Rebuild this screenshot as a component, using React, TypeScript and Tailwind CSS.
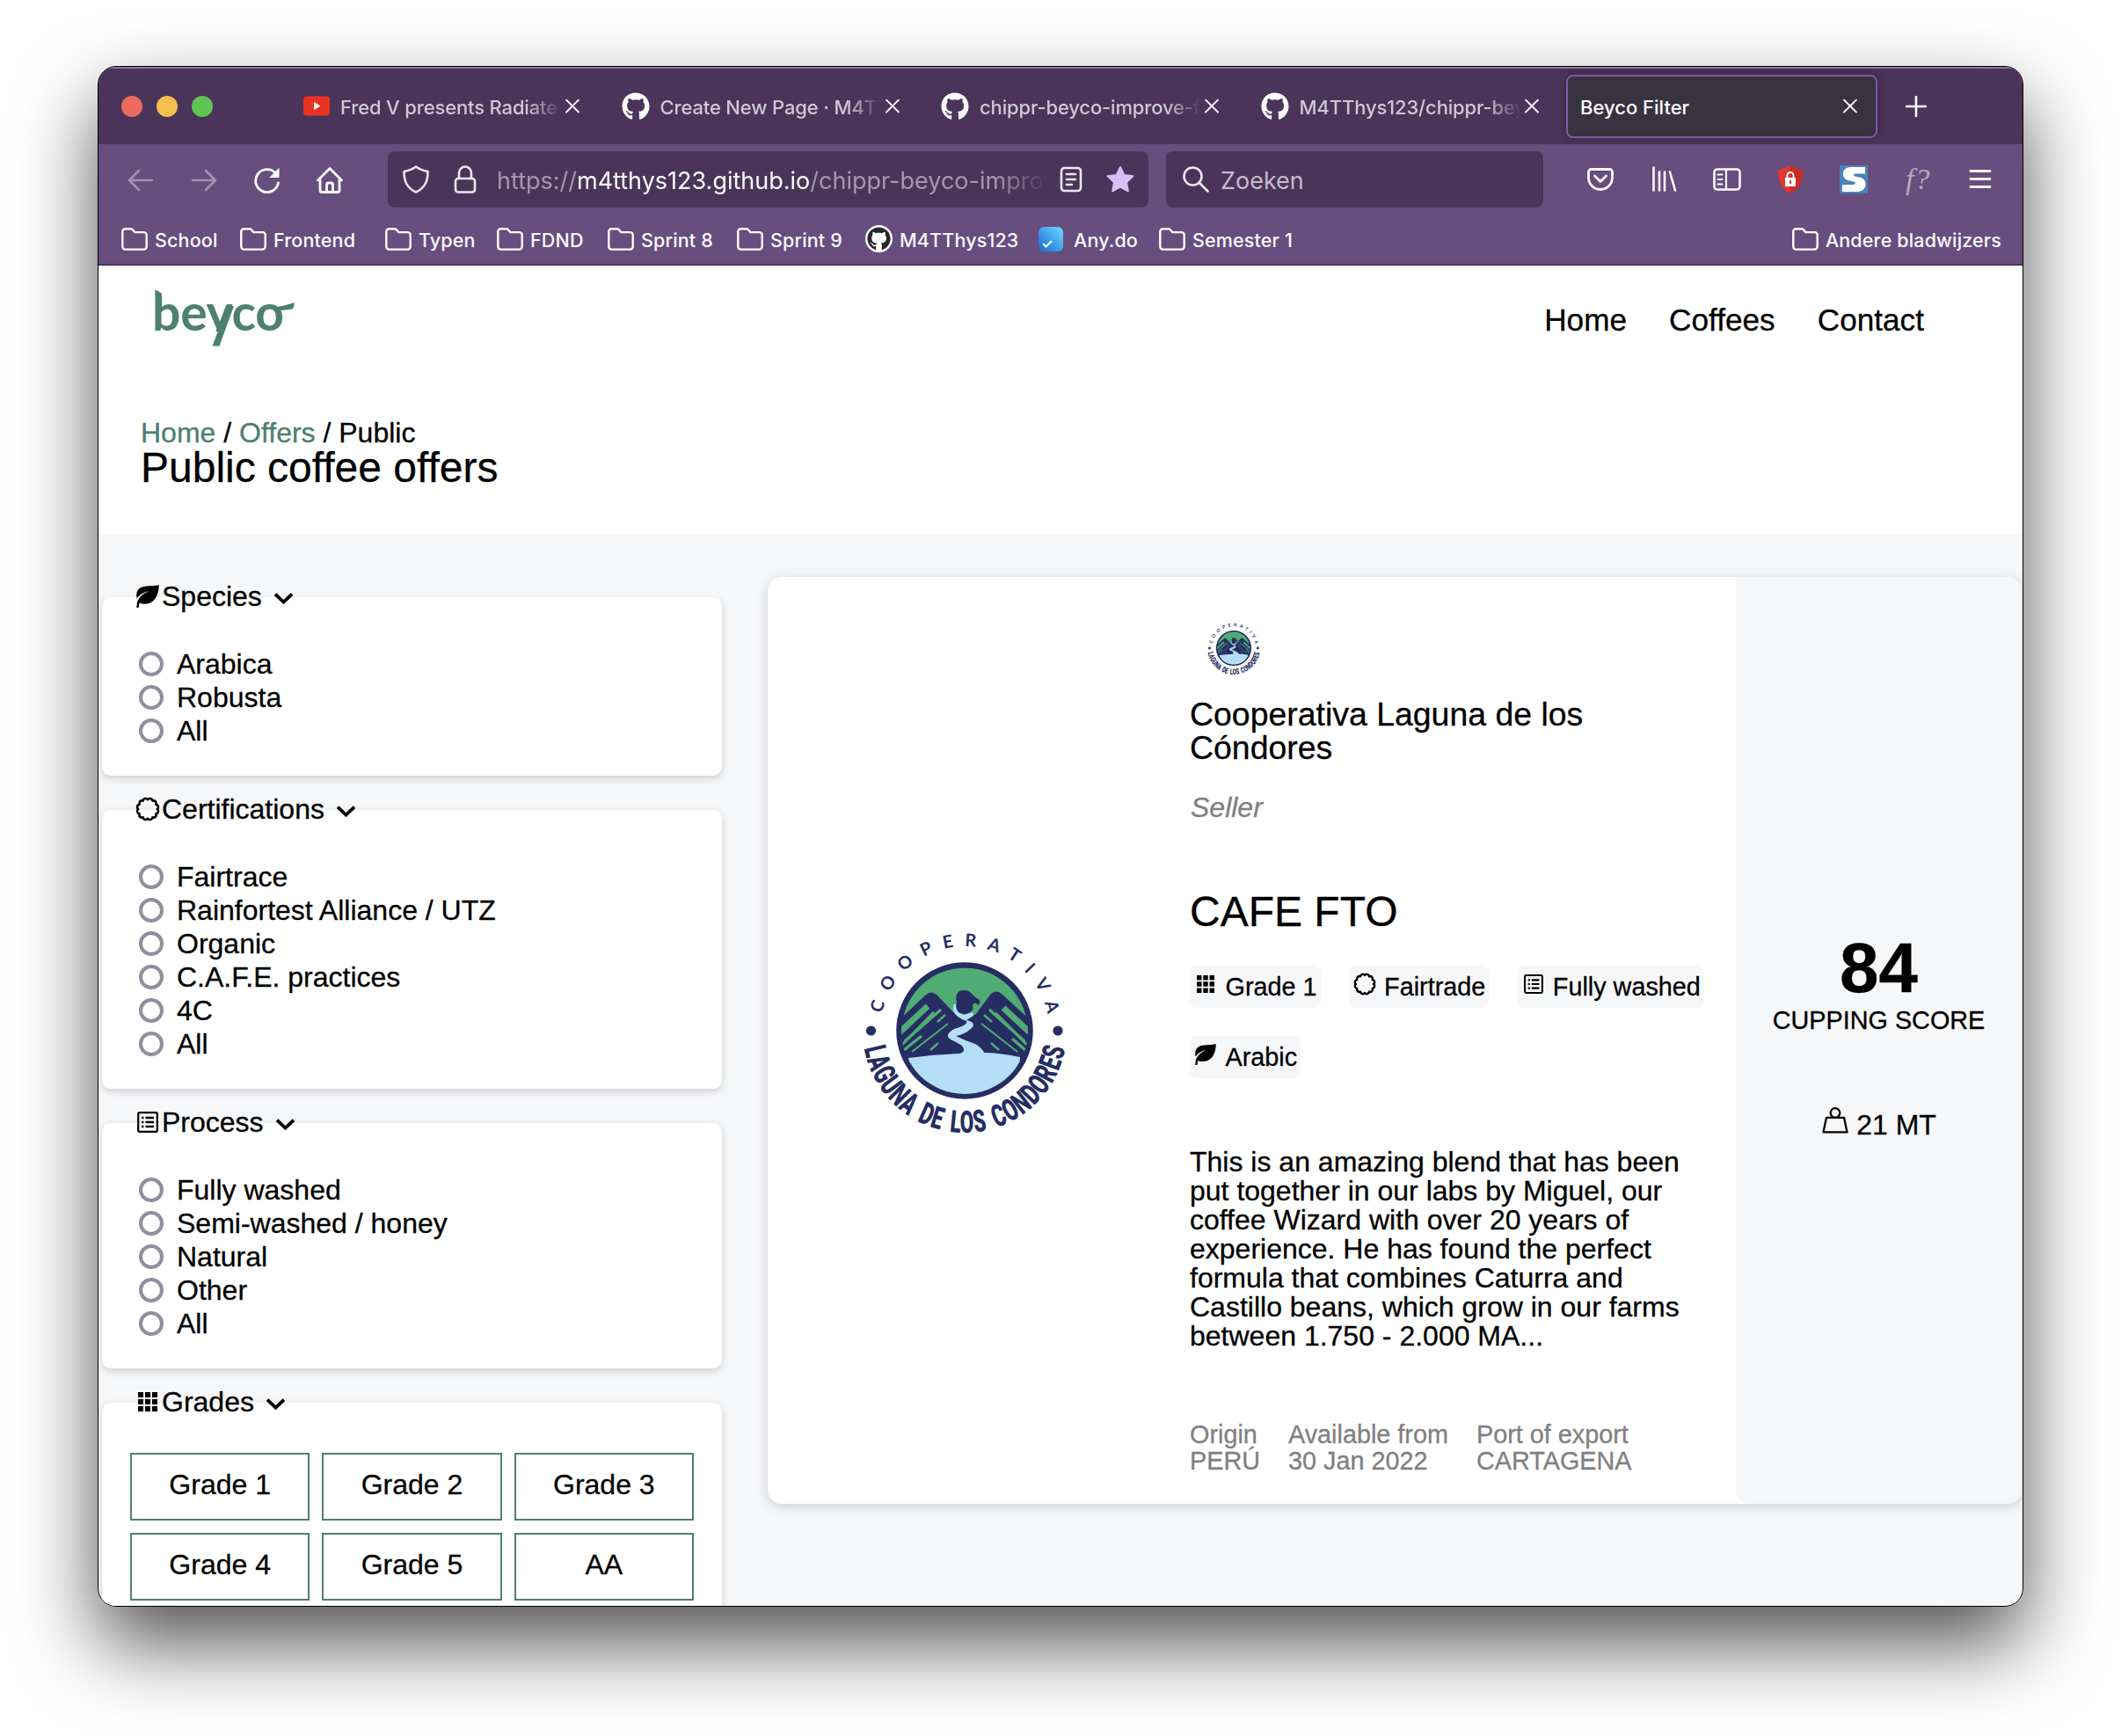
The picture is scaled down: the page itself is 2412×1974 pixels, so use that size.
import React from "react";
import { FaGithub } from "react-icons/fa";

type IconProps = { className?: string };

/* ---------- page icons ---------- */

const LeafIcon = ({ className = "" }: IconProps) => (
  <svg viewBox="0 0 26 26" className={className} fill="currentColor">
    <path d="M25.6 0C19 2.2 10 .2 4.400 3.600 .4 6 -.4 11 .6 15.600 3.500 11.500 8 8.300 14.500 7.200 8.500 9.300 3 13.800 1 19.500L.3 26h2.400l.8-5.500C8 22.500 15 22.500 19.500 18 24 13.500 26 6 25.600 0z" />
  </svg>
);

const bumps = Array.from({ length: 12 }, (_, i) => {
  const a = ((i + 1) * Math.PI) / 6;
  return `A3 3 0 0 1 ${(14 + 10.8 * Math.sin(a)).toFixed(2)} ${(14 - 10.8 * Math.cos(a)).toFixed(2)}`;
}).join("");

const BadgeIcon = ({ className = "" }: IconProps) => (
  <svg viewBox="0 0 28 28" className={className} fill="none" stroke="currentColor" strokeWidth="2.6" strokeLinejoin="round">
    <path d={`M14 3.200${bumps}Z`} />
  </svg>
);

const ListIcon = ({ className = "" }: IconProps) => (
  <svg viewBox="0 0 24 24" className={className} fill="none" stroke="currentColor" strokeWidth="2.2">
    <rect x="1.200" y="1.200" width="21.600" height="21.600" rx="1.500" />
    <path d="M5 7h2.400M5 12h2.400M5 17h2.400M9.500 7h9.500M9.500 12h9.500M9.500 17h9.500" strokeWidth="2.400" />
  </svg>
);

const GridIcon = ({ className = "" }: IconProps) => (
  <svg viewBox="0 0 22 22" className={className} fill="currentColor">
    {[0, 8, 16].map((y) => [0, 8, 16].map((x) => <rect key={`${x}-${y}`} x={x} y={y} width="6" height="6" />))}
  </svg>
);

const Chevron = ({ className = "" }: IconProps) => (
  <svg viewBox="0 0 24 14" className={className} fill="none" stroke="currentColor" strokeWidth="4">
    <path d="M1.800 1.800 12 11.500 22.200 1.800" />
  </svg>
);

const WeightIcon = ({ className = "" }: IconProps) => (
  <svg viewBox="0 0 30 30" className={className} fill="none" stroke="currentColor" strokeWidth="2.300" strokeLinejoin="round">
    <circle cx="15" cy="6.500" r="5.300" />
    <path d="M5 11.800h20l3.500 16.500h-27z" />
  </svg>
);

/* ---------- logos ---------- */

const BeycoLogo = () => (
  <svg width="170" height="72" viewBox="0 0 170 72" className="block text-[#4d8070]" fill="currentColor">
    <defs>
      <clipPath id="wordmark">
        <rect x="-5" y="-5" width="180" height="52" />
      </clipPath>
    </defs>
    <text x="-3" y="46" fontFamily="Lato, sans-serif" fontWeight="700" fontSize="57" textLength="150" clipPath="url(#wordmark)">
      beyco
    </text>
    <path d="M0 0c5 .5 8 3 8.200 8V22H1.200V10z" />
    <path d="M82.500 18h7.500L73.500 63.500H65.500z" />
    <path d="M131 18.500C140 20 150 17 158.500 14c.5 3 0 5-2 7.500-5 1-12 .8-17 2.500z" />
  </svg>
);

const CondorLogo = ({ id, className = "" }: { id: string; className?: string }) => (
  <svg viewBox="-120 -120 240 240" className={className}>
    <defs>
      <path id={`${id}-top`} d="M-96 0A96 96 0 0 1 96 0" />
      <path id={`${id}-bottom`} d="M-116 0A116 116 0 0 0 116 0" />
      <clipPath id={`${id}-clip`}>
        <circle r="72" />
      </clipPath>
    </defs>
    <circle r="74.500" fill="#50ab74" stroke="#262d63" strokeWidth="6.500" />
    <g clipPath={`url(#${id}-clip)`}>
      <path d="M-80 -7-44-41q6-5 12 0l22 23h22L30-42q6-5 12 0L80-7V40H-80z" fill="#262d63" />
      <g stroke="#50ab74" strokeWidth="3.200">
        <path d="M-74 2-42-28" strokeWidth="7" />
        <path d="M-72 17-35-21M-68 12-27-24M-69 22-49 6" />
        <path d="M-60 24-19-8" strokeWidth="2" />
        <path d="M-31-10-22-18M-39 22-30 14" strokeWidth="2.500" />
        <path d="M74 2 44-26" strokeWidth="7" />
        <path d="M72 17 35-20M68 12 28-24M69 22 54 9" />
        <path d="M60 24 19-8" strokeWidth="2" />
        <path d="M31-10 22-18M39 22 30 14" strokeWidth="2.500" />
      </g>
      <path d="M-64 31Q-35 27-6 26q8-2 3-9-6-4-13-7-8-5 4-12 17-5 14-9-12-4-15-12-1-6 2-8l4 2q-1 9 6 11l10-3 1 4-8 5q12 3 6 9-9 8-18 9 10 5 22 9 8 5 10 10 16 0 41 5L60 74H-60z" fill="#b4def7" />
      <path d="M-9-33a11 11 0 0 1 3-12q9-3 14 3 4 5 9 7 1 3-1 6-6-5-7 1 2 4-3 7-8 5-14-1-3-5-1-11z" fill="#262d63" />
    </g>
    <g fill="#262d63">
      <circle cx="-106.500" cy="0" r="5.600" />
      <circle cx="106" cy="0" r="5.600" />
      <text fontFamily="Lato, sans-serif" fontWeight="700" fontSize="20">
        <textPath href={`#${id}-top`} startOffset="20" textLength="262">
          COOPERATIVA
        </textPath>
      </text>
      <text fontFamily="Roboto, sans-serif" fontWeight="900" fontSize="35" wordSpacing="5" letterSpacing="1.500">
        <textPath href={`#${id}-bottom`} startOffset="20" textLength="325" lengthAdjust="spacingAndGlyphs">
          LAGUNA DE LOS CONDORES
        </textPath>
      </text>
    </g>
  </svg>
);

/* ---------- browser chrome ---------- */

const Stroke = ({ children, className = "", w = 2.600 }: { children: React.ReactNode; className?: string; w?: number }) => (
  <svg viewBox="0 0 32 32" className={`block size-8 shrink-0 ${className}`} fill="none" stroke="currentColor" strokeWidth={w} strokeLinecap="round" strokeLinejoin="round">
    {children}
  </svg>
);

const Close = () => (
  <svg viewBox="0 0 16 16" className="block size-4 shrink-0" fill="none" stroke="#fff" strokeWidth="1.800" strokeLinecap="round">
    <path d="M1 .5l14 14M15 .5 1 14.500" />
  </svg>
);

const YoutubeIcon = () => (
  <svg viewBox="0 0 32 32" className="block size-8 shrink-0">
    <rect x="2" y="4.500" width="30" height="22" rx="4" fill="#ea3323" />
    <path d="M14 11 21.500 15.500 14 20z" fill="#fff" />
  </svg>
);

const Folder = () => (
  <svg viewBox="0 0 30 26" className="block h-[26px] w-[30px] shrink-0" fill="none" stroke="#fff" strokeWidth="2.400" strokeLinejoin="round">
    <path d="M1.300 4.500a3 3 0 0 1 3-3.200h6.500c1.500 0 2 .7 3 2l1.400 1.800h10.500a3 3 0 0 1 3 3v13.500a3 3 0 0 1-3 3H4.300a3 3 0 0 1-3-3z" />
  </svg>
);

const tabs = [
  { title: "Fred V presents Radiate", icon: <YoutubeIcon /> },
  { title: "Create New Page · M4TT", icon: <FaGithub className="size-8 shrink-0" /> },
  { title: "chippr-beyco-improve-fi", icon: <FaGithub className="size-8 shrink-0" /> },
  { title: "M4TThys123/chippr-beyc", icon: <FaGithub className="size-8 shrink-0" /> },
];

const TabBar = () => (
  <div className="flex h-[88px] items-center border-t-2 border-[#86789a] bg-[#4b3459] pl-[26px]">
    <div className="flex w-[189px] shrink-0 gap-4">
      <span className="size-6 rounded-full bg-[#ed6a5e]" />
      <span className="size-6 rounded-full bg-[#f5bf4f]" />
      <span className="size-6 rounded-full bg-[#61c554]" />
    </div>
    {tabs.map((t) => (
      <div key={t.title} className="flex w-[363.5px] shrink-0 items-center pl-4 text-white">
        {t.icon}
        <span className="ml-3 mt-0.5 w-[252px] overflow-hidden whitespace-nowrap text-[22px] font-[450] tracking-[-0.15px] text-[#cfc8d3] [mask-image:linear-gradient(to_right,#000_84%,transparent_100%)]">
          {t.title}
        </span>
        <span className="ml-1"><Close /></span>
      </div>
    ))}
    <div className="flex h-[72px] w-[354px] shrink-0 items-center justify-between rounded-lg border-2 border-[#8258a8] bg-[#393240] pl-3.5 pr-[21px] text-[22px] font-medium text-white shadow-[0_0_8px_rgba(0,0,0,0.3)]">
      <span className="mt-0.5">Beyco Filter</span>
      <Close />
    </div>
    <svg viewBox="0 0 24 24" className="ml-8 size-6 shrink-0" stroke="#fff" strokeWidth="2.600" strokeLinecap="round">
      <path d="M12 1v22M1 12h22" />
    </svg>
  </div>
);

const NavBar = () => (
  <div className="flex h-20 items-center text-[#fbfbfe]">
    <div className="flex w-[329px] shrink-0 items-center gap-10 pl-8">
      <Stroke className="opacity-40"><path d="M29 17H3M14 6 3 17l11 11" /></Stroke>
      <Stroke className="opacity-40"><path d="M3 17h26M18 6l11 11-11 11" /></Stroke>
      <Stroke w={2.800}>
        <path d="M28.500 20A13 13 0 1 1 25 8.500" />
        <path d="M29 4v9.500h-9.500z" fill="currentColor" strokeWidth="1" />
      </Stroke>
      <Stroke w={2.800} className="-ml-px">
        <path d="M2.500 17 16 3.500 29.500 17M5 15.500V28.500a2 2 0 0 0 2 2h18a2 2 0 0 0 2-2V15.500M12.500 30v-8a2 2 0 0 1 2-2h3a2 2 0 0 1 2 2v8" />
      </Stroke>
    </div>
    <div className="flex h-16 w-[865px] shrink-0 items-center rounded-lg bg-[#4b3459] pl-4">
      <Stroke className="opacity-90"><path d="M16 1.500c4 3 8 4.500 13.500 5.500 0 11-3 18.500-13.500 23.500C5.500 25.500 2.500 18 2.500 7 8 6 12 4.500 16 1.500z" /></Stroke>
      <Stroke className="ml-6 opacity-90"><rect x="5" y="15" width="22" height="15.500" rx="3" /><path d="M9 15V8.500a7 7 0 0 1 14 0V15" /></Stroke>
      <span className="ml-[20px] mt-1 w-[630px] overflow-hidden whitespace-nowrap text-[27px] text-[#a697b0] [mask-image:linear-gradient(to_right,#000_90%,transparent_99.5%)]">
        https://<span className="text-[#fbfbfe]">m4tthys123.github.io</span>/chippr-beyco-improve
      </span>
      <Stroke className="ml-[7px] opacity-90"><rect x="5" y="3" width="22" height="26" rx="3.500" /><path d="M11 10h10M11 16h10M11 22h6" /></Stroke>
      <svg viewBox="0 0 32 32" className="ml-6 block size-8 shrink-0" fill="#d9bff5" stroke="#d9bff5" strokeWidth="2" strokeLinejoin="round">
        <path d="M16 2l4.300 9 10 1.300-7.300 7 1.800 10L16 24.500l-8.800 4.800 1.800-10-7.300-7 10-1.300z" />
      </svg>
    </div>
    <div className="ml-5 flex h-16 w-[429px] shrink-0 items-center gap-3 rounded-lg bg-[#4b3459] pl-[18px]">
      <Stroke className="opacity-90"><circle cx="12.500" cy="12.500" r="10" /><path d="M20 20l9.500 9.500" /></Stroke>
      <span className="mt-1 text-[27px] text-[#c4bbca]">Zoeken</span>
    </div>
    <div className="ml-[49px] flex shrink-0 items-center gap-10">
      <Stroke w={2.800}><path d="M5.500 4.500h21a3 3 0 0 1 3 3V14a13.500 13.500 0 0 1-27 0V7.500a3 3 0 0 1 3-3zM9.500 12l6.500 6.500 6.500-6.500" /></Stroke>
      <Stroke><path d="M4.500 2.500v26M11 7.500v21M17 7.500v21M23 7.500l6 21" /></Stroke>
      <Stroke><rect x="1.500" y="4.500" width="29" height="23" rx="3.500" /><path d="M15 5v22M5.500 10.500h5M5.500 16h5M5.500 21.500h5" strokeWidth="2.200" /></Stroke>
      <svg viewBox="0 0 32 32" className="block size-8 shrink-0">
        <path d="M16 0c4 3 8 4 14 5 0 12-2 20-14 27C4 25 2 17 2 5c6-1 10-2 14-5z" fill="#e6352b" />
        <path d="M16 0c4 3 8 4 14 5 0 12-2 20-14 27z" fill="#c92c24" />
        <rect x="10" y="14" width="12" height="10" fill="#fff" />
        <path d="M12.500 14v-2.500a3.500 3.500 0 0 1 7 0V14" fill="none" stroke="#fff" strokeWidth="2" />
        <rect x="15.200" y="17" width="1.800" height="4" fill="#c92c24" />
      </svg>
      <svg viewBox="0 0 32 32" className="block size-8 shrink-0">
        <rect width="32" height="32" fill="#4a84b8" />
        <path d="M29 2v7.500H17.500c-2 0-2 2.500 0 3l6 1.300c9 2.200 8 16.200-3.500 16.200H3v-8h12.500c3 0 3-3 .5-3.500l-6-1.300C1 15 2 2 12.500 2z" fill="#fff" />
      </svg>
      <span className="w-8 whitespace-nowrap pl-[3px] font-['Liberation_Serif'] text-[34px] italic leading-8 tracking-[1px] text-[#b5aab9]">f?</span>
      <Stroke w={2.800}><path d="M5 6.500h22M5 15.500h22M5 24.500h22" /></Stroke>
    </div>
  </div>
);

const Bookmark = ({ className, icon = <Folder />, label }: { className: string; icon?: React.ReactNode; label: string }) => (
  <div className={`flex shrink-0 items-center gap-2 whitespace-nowrap ${className}`}>
    {icon}
    <span className="mt-1 tracking-[0.15px]">{label}</span>
  </div>
);

const Bookmarks = () => (
  <div className="flex h-[58px] items-center border-b-2 border-[#4b3459] pb-px pl-[26px] text-[21.500px] font-medium text-[#fbfbfe]">
    <Bookmark className="w-[135px]" label="School" />
    <Bookmark className="w-[165px]" label="Frontend" />
    <Bookmark className="w-[127px]" label="Typen" />
    <Bookmark className="w-[126px]" label="FDND" />
    <Bookmark className="w-[147px]" label="Sprint 8" />
    <Bookmark className="w-[146px]" label="Sprint 9" />
    <Bookmark
      className="w-[197px]"
      label="M4TThys123"
      icon={
        <span className="flex size-[31px] items-center justify-center rounded-full border-2 border-white bg-white">
          <FaGithub className="size-[27px] text-[#24292e]" />
        </span>
      }
    />
    <Bookmark
      className="w-[137px]"
      label="Any.do"
      icon={
        <span className="mr-1 flex size-[28px] items-end rounded-md bg-linear-to-bl from-[#6fdcff] to-[#1c66d0] p-1">
          <svg viewBox="0 0 12 9" className="h-[9px] w-3" fill="none" stroke="#fff" strokeWidth="2"><path d="M1 4l3.500 3.500L11 1" /></svg>
        </span>
      }
    />
    <Bookmark className="w-[160px]" label="Semester 1" />
    <Bookmark className="ml-auto mr-[24px]" label="Andere bladwijzers" />
  </div>
);

/* ---------- page ---------- */

const Filter = ({ icon, title, children }: { icon: React.ReactNode; title: string; children: React.ReactNode }) => (
  <section className="w-[705px] rounded-[10px] bg-white shadow-[0_3px_10px_rgba(0,0,0,0.17)]">
    <h3 className="relative -top-[20px] flex h-[38px] items-center pl-[37px] leading-[38px]">
      <span className="flex w-[29px] items-center justify-center">{icon}</span>
      <span className="ml-0.5">{title}</span>
      <Chevron className="ml-[13px] mt-1 h-[13px] w-[23px]" />
    </h3>
    {children}
  </section>
);

const Options = ({ items }: { items: string[] }) => (
  <ul className="pb-8 pl-[42px] pt-[19px] leading-[38px]">
    {items.map((o) => (
      <li key={o} className="flex h-[38px] items-center gap-[15px]">
        <span className="size-7 rounded-full border-4 border-[#8f8f9d] bg-white" />
        <span>{o}</span>
      </li>
    ))}
  </ul>
);

const Tag = ({ icon, label }: { icon: React.ReactNode; label: string }) => (
  <span className="flex h-12 items-center rounded-lg bg-[#f6f7f9] px-1 leading-[48px]">
    <span className="mb-1.5 mr-2 flex w-[28.500px] justify-center">{icon}</span>
    {label}
  </span>
);

const Meta = ({ label, value }: { label: string; value: string }) => (
  <div>
    <p>{label}</p>
    <p>{value}</p>
  </div>
);

export default function App() {
  return (
    <div className="h-[1974px] w-[2412px] overflow-hidden bg-white pl-[111px] pt-[75px] font-['Liberation_Sans',sans-serif] text-[32px] text-black">
      <div className="h-[1752px] w-[2190px] rounded-[21px] shadow-[0_42px_90px_rgba(0,0,0,0.68)]">
        <div className="flex h-full flex-col overflow-hidden rounded-[21px] border border-black bg-[#f6f7f9]">
          <div className="shrink-0 bg-[#684d7f] font-['Inter',sans-serif]">
            <TabBar />
            <NavBar />
            <Bookmarks />
          </div>

          <header className="h-[306px] shrink-0 bg-white [-webkit-text-stroke:0.3px]">
            <div className="flex h-[174px] items-start justify-between pl-16 pr-[112px] pt-7">
              <BeycoLogo />
              <nav className="flex gap-12 pt-[14px] text-[35.200px] leading-10">
                <a>Home</a>
                <a>Coffees</a>
                <a>Contact</a>
              </nav>
            </div>
            <div className="pl-12">
              <p className="leading-[33px]">
                <a className="text-[#4d8070]">Home</a> / <a className="text-[#4d8070]">Offers</a> / Public
              </p>
              <h1 className="text-5xl leading-[46px]">Public coffee offers</h1>
            </div>
          </header>

          <main className="flex min-h-0 flex-1 overflow-hidden [-webkit-text-stroke:0.3px]">
            <aside className="flex w-[761px] shrink-0 flex-col gap-[39px] pl-1 pt-[71px]">
              <Filter icon={<LeafIcon className="size-[26px]" />} title="Species">
                <Options items={["Arabica", "Robusta", "All"]} />
              </Filter>
              <Filter icon={<BadgeIcon className="size-[28px]" />} title="Certifications">
                <Options items={["Fairtrace", "Rainfortest Alliance / UTZ", "Organic", "C.A.F.E. practices", "4C", "All"]} />
              </Filter>
              <Filter icon={<ListIcon className="size-[24px]" />} title="Process">
                <Options items={["Fully washed", "Semi-washed / honey", "Natural", "Other", "All"]} />
              </Filter>
              <Filter icon={<GridIcon className="size-[22px]" />} title="Grades">
                <div className="grid grid-cols-3 gap-[14px] px-8 pb-8 pt-[19px]">
                  {["Grade 1", "Grade 2", "Grade 3", "Grade 4", "Grade 5", "AA"].map((g) => (
                    <button key={g} className="h-[77px] border-2 border-[#4d8070] pb-1.5">
                      {g}
                    </button>
                  ))}
                </div>
              </Filter>
            </aside>

            <article className="mt-12 flex h-[1054px] w-[1426px] shrink-0 rounded-2xl bg-white shadow-[0_3px_14px_rgba(0,0,0,0.17)]">
              <div className="flex w-[480px] shrink-0 items-center pb-[22px] pl-[104px]">
                <CondorLogo id="brand" className="size-[240px]" />
              </div>
              <div className="w-[621px] shrink-0 pr-8 pt-[50px]">
                <CondorLogo id="seller" className="ml-[19px] size-[62px]" />
                <h3 className="mt-[25px] pr-16 text-[37.440px] leading-[38px]">Cooperativa Laguna de los Cóndores</h3>
                <p className="mt-[31px] pl-px italic leading-9 text-[#808080]">Seller</p>
                <h2 className="mt-[77px] text-5xl leading-[48px]">CAFE FTO</h2>
                <div className="mt-[37px] flex flex-wrap gap-8 text-[28.800px]">
                  <Tag icon={<GridIcon className="size-5" />} label="Grade 1" />
                  <Tag icon={<BadgeIcon className="size-[26px]" />} label="Fairtrade" />
                  <Tag icon={<ListIcon className="size-[22px]" />} label="Fully washed" />
                  <Tag icon={<LeafIcon className="size-[24px]" />} label="Arabic" />
                </div>
                <p className="mt-[79px] leading-[33px]">
                  This is an amazing blend that has been put together in our labs by Miguel, our coffee Wizard with over 20 years of
                  experience. He has found the perfect formula that combines Caturra and Castillo beans, which grow in our farms
                  between 1.750 - 2.000 MA...
                </p>
                <div className="mt-[80px] flex gap-8 text-[28.800px] leading-[30px] text-[#808080]">
                  <Meta label="Origin" value="PERÚ" />
                  <Meta label="Available from" value="30 Jan 2022" />
                  <Meta label="Port of export" value="CARTAGENA" />
                </div>
              </div>
              <div className="flex flex-1 flex-col items-center rounded-2xl rounded-tl-none bg-[#f6f7f9] pt-[405px]">
                <strong className="text-[80px] leading-[80px]">84</strong>
                <span className="mt-[3px] text-[28.800px] leading-8">CUPPING SCORE</span>
                <span className="mt-[85px] flex gap-[9px] pl-px leading-9">
                  <WeightIcon className="-mt-0.5 size-[30px]" />
                  21 MT
                </span>
              </div>
            </article>
          </main>
        </div>
      </div>
    </div>
  );
}
